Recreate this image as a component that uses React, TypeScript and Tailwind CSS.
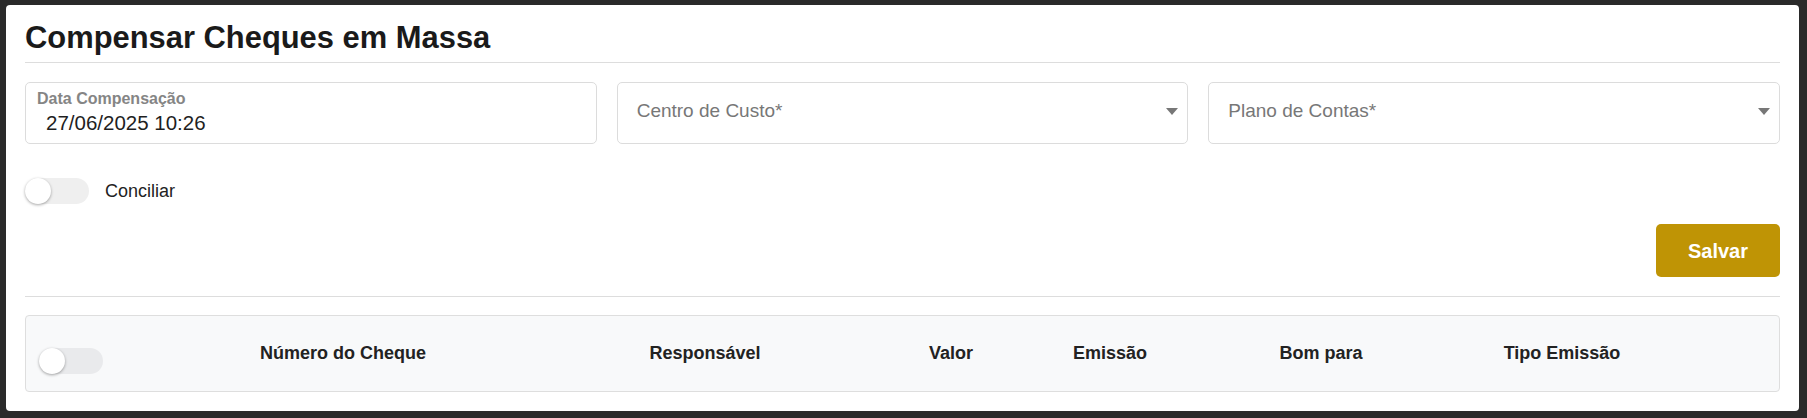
import React from "react";

function Toggle({ track }: { track: string }) {
  return (
    <div className={`relative h-[26px] w-[64px] rounded-full ${track}`}>
      <div className="absolute left-0 top-0 h-[26px] w-[26px] rounded-full bg-white shadow-[0_1px_3px_rgba(0,0,0,0.35)]" />
    </div>
  );
}

function Caret() {
  return (
    <svg width="12" height="7" viewBox="0 0 12 7" className="shrink-0">
      <path d="M0 0 L12 0 L6 7 Z" fill="#777777" />
    </svg>
  );
}

export default function App() {
  const headers = [
    "Número do Cheque",
    "Responsável",
    "Valor",
    "Emissão",
    "Bom para",
    "Tipo Emissão",
  ];
  return (
    <div
      className="h-[418px] w-full bg-[#2a2a2a] pt-[5px] pl-[6px] pr-[8px]"
      style={{ fontFamily: '"Liberation Sans", Arial, sans-serif' }}
    >
      <div className="flex h-[406px] flex-col rounded-[4px] bg-white px-[19px] pt-[15px] pb-[19px]">
        <div className="border-b border-[#dddddd] pb-[6px]">
          <h1 className="text-[30.9px] font-bold leading-[36px] text-[#1a1a1a]">
            Compensar Cheques em Massa
          </h1>
        </div>

        <div className="mt-[19px] grid grid-cols-3 gap-[20px]">
          <div className="h-[62px] rounded-[5px] border border-[#dcdcdc] pl-[11px] pt-[7px]">
            <div className="text-[16px] font-bold leading-[18px] text-[#858585]">
              Data Compensação
            </div>
            <div className="mt-[3px] pl-[9px] text-[20.5px] leading-[24px] text-[#1f1f1f]">
              27/06/2025 10:26
            </div>
          </div>
          <div className="flex h-[62px] items-center justify-between rounded-[5px] border border-[#dcdcdc] pb-[4px] pl-[19px] pr-[9px]">
            <span className="text-[19px] text-[#777777]">Centro de Custo*</span>
            <Caret />
          </div>
          <div className="flex h-[62px] items-center justify-between rounded-[5px] border border-[#dcdcdc] pb-[4px] pl-[19px] pr-[9px]">
            <span className="text-[19px] text-[#777777]">Plano de Contas*</span>
            <Caret />
          </div>
        </div>

        <div className="mt-[34px] flex items-center gap-[16px]">
          <Toggle track="bg-[#efefef]" />
          <span className="text-[18px] leading-[22px] text-[#222222]">Conciliar</span>
        </div>

        <div className="mt-[20px] flex justify-end">
          <button className="h-[53px] w-[124px] rounded-[5px] bg-[#bf9405] text-[20px] font-bold text-white">
            Salvar
          </button>
        </div>

        <div className="mt-[19px] border-t border-[#dddddd]" />

        <div className="mt-[18px] h-[77px] rounded-[4px] border border-[#dedede] bg-[#f8f9fa]">
          <div className="grid grid-cols-[89px_456px_268px_224px_94px_328px_154px_1fr] items-start">
            <div className="pl-[13px] pt-[32px]">
              <Toggle track="bg-[#e9eaec]" />
            </div>
            {headers.map((h) => (
              <div
                key={h}
                className="whitespace-nowrap pt-[26px] text-center text-[18px] font-bold leading-[22px] text-[#222222]"
              >
                {h}
              </div>
            ))}
            <div />
          </div>
        </div>
      </div>
    </div>
  );
}
